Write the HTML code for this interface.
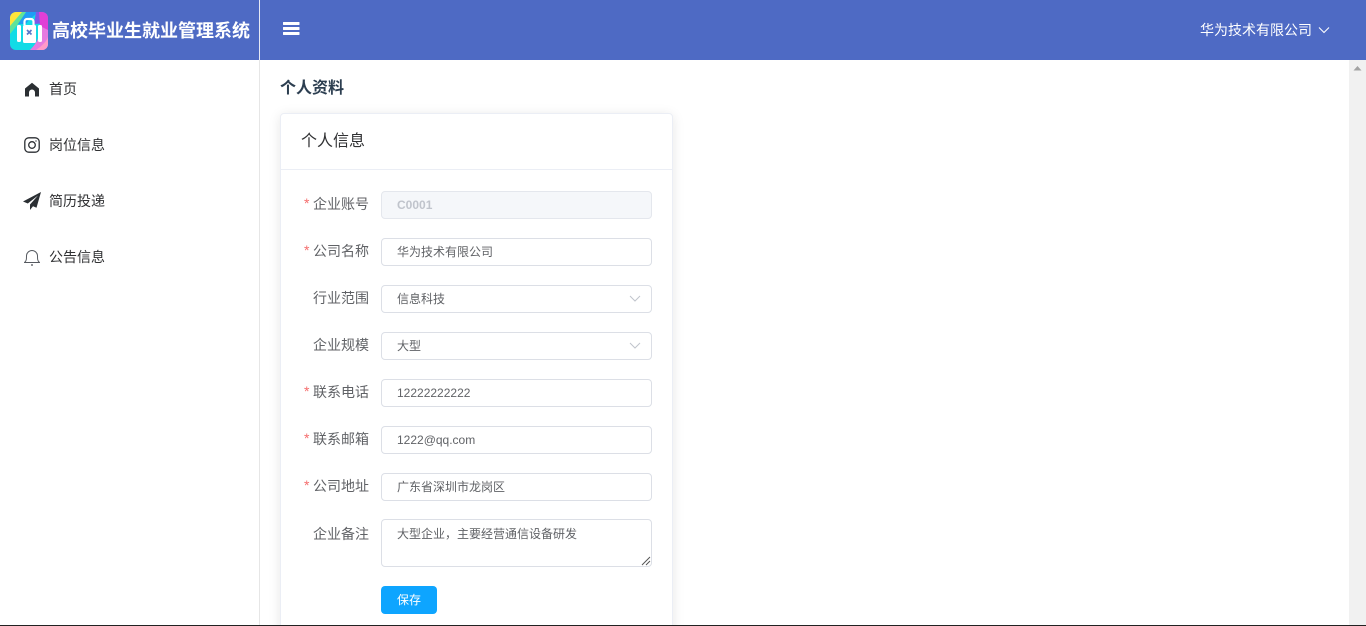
<!DOCTYPE html>
<html lang="zh"><head><meta charset="utf-8"><title>个人资料</title>
<style>
*{box-sizing:border-box;margin:0;padding:0}
html,body{width:1366px;height:626px;overflow:hidden;background:#fff;font-family:"Liberation Sans","Noto Sans CJK SC",sans-serif}
#wrap{position:relative;width:1366px;height:626px;overflow:hidden}
.t{position:absolute;white-space:nowrap;line-height:20px}
#hd{position:absolute;left:0;top:0;width:1366px;height:60px;background:#4e6ac4}
#dv{position:absolute;left:259px;top:0;width:1px;height:60px;background:#e6e9f5}
#dv2{position:absolute;left:259px;top:60px;width:1px;height:566px;background:#e6e6e6}
#sb{position:absolute;left:1349px;top:60px;width:17px;height:566px;background:#f1f1f1}
#bl{position:absolute;left:0;top:625px;width:1366px;height:1px;background:#222}
#card{position:absolute;left:280px;top:113px;width:393px;height:530px;background:#fff;border:1px solid #ebeef5;border-radius:4px;box-shadow:0 2px 12px rgba(0,0,0,.1)}
#cl{position:absolute;left:281px;top:169px;width:391px;height:1px;background:#ebeef5}
.m{font-size:14px;color:#303133;left:49px}
.l{font-size:14px;color:#606266;width:70px;text-align:right;left:299px}
.s{color:#f56c6c;font-size:14px;left:304px}
.i{position:absolute;left:381px;width:271px;height:28px;border:1px solid #dcdfe6;border-radius:4px;background:#fff;font-size:12px;color:#606266;line-height:26px;padding-left:15px;white-space:nowrap}
</style></head><body>
<div id="wrap">
<div id="hd"></div><div id="dv"></div><div id="dv2"></div><div id="sb"></div>
<svg style="position:absolute;left:1352px;top:65px" width="11" height="6"><path d="M1.500 5.500L5.500 1 9.500 5.500Z" fill="#a3a3a3"/></svg>

<svg style="position:absolute;left:10px;top:12px" width="38" height="38" viewBox="0 0 38 38">
<defs><clipPath id="c"><rect width="38" height="38" rx="6"/></clipPath></defs>
<g clip-path="url(#c)">
<rect width="38" height="38" fill="#12dbe6"/>
<path d="M0 0H14L0 16Z" fill="#ffe53a"/>
<path d="M12 0H18L0 22V14Z" fill="#5fe39a"/>
<path d="M16 0H28C22 6 18 8 16 12L8 12Z" fill="#1f9df5"/>
<path d="M26 0H38V14C36 10 30 12 24 12Z" fill="#7a5ae8"/>
<path d="M29 0H38V22L30 14Z" fill="#e13fd6"/>
<path d="M30 14L38 18V38H20C26 32 30 26 30 14Z" fill="#e67be0"/>
<path d="M26 38C32 34 38 28 38 24V38Z" fill="#ff9ac8"/>
</g>
<path d="M14.500 13V9.500a2.500 2.500 0 0 1 2.500-2.500h4a2.500 2.500 0 0 1 2.500 2.500V13" fill="none" stroke="#fff" stroke-width="2.200"/>
<rect x="13" y="13" width="13" height="18" rx="1.500" fill="#fff"/>
<rect x="7" y="13" width="4" height="17" rx="1.500" fill="#fff"/>
<rect x="28" y="13" width="4" height="17" rx="1.500" fill="#fff"/>
<path d="M17 18l4.500 4.500m0-4.500L17 22.500" stroke="#5a78c8" stroke-width="1.700"/>
</svg>
<div class="t" style="left:52px;top:21px;font-size:18px;font-weight:700;color:#fff">高校毕业生就业管理系统</div>

<svg style="position:absolute;left:283px;top:22px" width="17" height="14" fill="#fff"><rect y="0" width="16.500" height="3" rx=".5"/><rect y="5" width="16.500" height="3" rx=".5"/><rect y="10" width="16.500" height="3" rx=".5"/></svg>

<div class="t" style="left:1200px;top:20px;font-size:14px;color:#fff">华为技术有限公司</div>
<svg style="position:absolute;left:1318px;top:26px" width="13" height="9"><path d="M1 1.500L6 6.500 11 1.500" fill="none" stroke="#fff" stroke-width="1.100"/></svg>

<svg style="position:absolute;left:24px;top:82px" width="16" height="15" viewBox="0 0 16 15"><path d="M8 .8L15 6.500V14.500H11V10.500A3 3 0 0 0 5 10.500V14.500H1V6.500Z" fill="#2b2f33"/></svg>
<div class="t m" style="top:79px">首页</div>

<svg style="position:absolute;left:24px;top:136.500px" width="16" height="16" viewBox="0 0 16 16" fill="none" stroke="#2b2f33" stroke-width="1.300"><rect x=".8" y=".8" width="14.400" height="14.400" rx="4"/><circle cx="8" cy="8" r="3.300"/><circle cx="12" cy="4" r=".5" fill="#2b2f33" stroke-width=".5"/></svg>
<div class="t m" style="top:135px">岗位信息</div>

<svg style="position:absolute;left:23px;top:192px" width="18" height="18" viewBox="0 0 18 18"><path d="M18 0L0 9.500l4.800 2L15 3.500 7 12.500V18l3-3.800 3.500 1.500Z" fill="#2b2f33"/></svg>
<div class="t m" style="top:191px">简历投递</div>

<svg style="position:absolute;left:24px;top:249px" width="16" height="18" viewBox="0 0 16 18" fill="none" stroke="#55595f" stroke-width="1"><path d="M.5 13.500H15.500C13.500 12 13.500 10 13.500 7A5.500 5.500 0 0 0 2.500 7C2.500 10 2.500 12 .5 13.500Z"/><path d="M7 16h2" stroke-width="1.300"/></svg>
<div class="t m" style="top:247px">公告信息</div>

<div class="t" style="left:280px;top:79px;font-size:16px;font-weight:700;color:#2c3e50;line-height:20px">个人资料</div>

<div id="card"></div><div id="cl"></div>
<div class="t" style="left:301px;top:132px;font-size:16px;color:#303133">个人信息</div>

<div class="t s" style="top:193px">*</div><div class="t l" style="top:194px">企业账号</div>
<div class="i" style="top:191px;background:#f5f7fa;border-color:#e4e7ed;color:#c0c4cc;font-weight:700">C0001</div>

<div class="t s" style="top:240px">*</div><div class="t l" style="top:241px">公司名称</div>
<div class="i" style="top:238px">华为技术有限公司</div>

<div class="t l" style="top:288px">行业范围</div>
<div class="i" style="top:285px">信息科技</div>
<svg style="position:absolute;left:629px;top:295px" width="12" height="8"><path d="M1 1L6 6 11 1" fill="none" stroke="#c0c4cc"/></svg>

<div class="t l" style="top:335px">企业规模</div>
<div class="i" style="top:332px">大型</div>
<svg style="position:absolute;left:629px;top:342px" width="12" height="8"><path d="M1 1L6 6 11 1" fill="none" stroke="#c0c4cc"/></svg>

<div class="t s" style="top:381px">*</div><div class="t l" style="top:382px">联系电话</div>
<div class="i" style="top:379px">12222222222</div>

<div class="t s" style="top:428px">*</div><div class="t l" style="top:429px">联系邮箱</div>
<div class="i" style="top:426px">1222@qq.com</div>

<div class="t s" style="top:475px">*</div><div class="t l" style="top:476px">公司地址</div>
<div class="i" style="top:473px">广东省深圳市龙岗区</div>

<div class="t l" style="top:524px">企业备注</div>
<div class="i" style="top:519px;height:48px;line-height:28px">大型企业，主要经营通信设备研发</div>
<svg style="position:absolute;left:641px;top:556px" width="10" height="10" stroke="#555" stroke-width="1"><path d="M1 9L9 1M5 9L9 5"/></svg>

<div class="t" style="left:381px;top:586px;width:56px;height:28px;background:#0ea5ff;border-radius:4px;color:#fff;font-size:12px;line-height:28px;text-align:center">保存</div>

<div id="bl"></div>
</div>
</body></html>
